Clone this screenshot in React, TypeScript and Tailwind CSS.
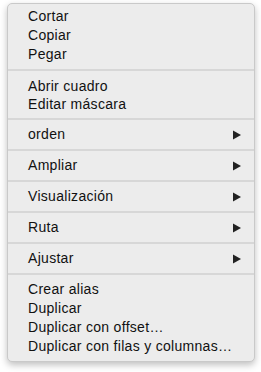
const groups: { items: string[]; submenu?: boolean; pt: string; pb: string; lh: string }[] = [
  { items: ['Cortar', 'Copiar', 'Pegar'], pt: 'pt-[3px]', pb: 'pb-[5px]', lh: 'h-[19px]' },
  { items: ['Abrir cuadro', 'Editar máscara'], pt: 'pt-[6px]', pb: 'pb-[5px]', lh: 'h-[18px]' },
  { items: ['orden'], submenu: true, pt: '', pb: '', lh: 'h-[29px]' },
  { items: ['Ampliar'], submenu: true, pt: '', pb: '', lh: 'h-[29px]' },
  { items: ['Visualización'], submenu: true, pt: '', pb: '', lh: 'h-[29px]' },
  { items: ['Ruta'], submenu: true, pt: '', pb: '', lh: 'h-[29px]' },
  { items: ['Ajustar'], submenu: true, pt: '', pb: '', lh: 'h-[29px]' },
  {
    items: ['Crear alias', 'Duplicar', 'Duplicar con offset…', 'Duplicar con filas y columnas…'],
    pt: 'pt-[5px]',
    pb: 'pb-[5px]',
    lh: 'h-[19px]',
  },
];

function Arrow() {
  return (
    <svg width="8" height="10" viewBox="0 0 8 10" className="shrink-0">
      <path d="M0 0.5 L8 5 L0 9.5 Z" fill="#222" />
    </svg>
  );
}

export default function App() {
  return (
    <div className="w-[261px] h-[372px] bg-white pl-[7px] pt-[3px]">
      <div
        className="w-[248px] bg-[#ececec] rounded-[5px] border border-[#c9c9c9] shadow-[0_3px_7px_rgba(0,0,0,0.25)] text-[14px] tracking-[0.3px] text-[#111]"
        style={{ fontFamily: '"Liberation Sans", Arial, sans-serif' }}
      >
        {groups.map((g, gi) => (
          <div key={gi}>
            {gi > 0 && <div className="h-[2px] bg-[#d7d7d7]" />}
            <div className={`${g.pt} ${g.pb}`}>
              {g.items.map(item => (
                <div key={item} className={`flex items-center justify-between pl-[20px] pr-[13px] ${g.lh}`}>
                  <span>{item}</span>
                  {g.submenu && <Arrow />}
                </div>
              ))}
            </div>
          </div>
        ))}
      </div>
    </div>
  );
}
